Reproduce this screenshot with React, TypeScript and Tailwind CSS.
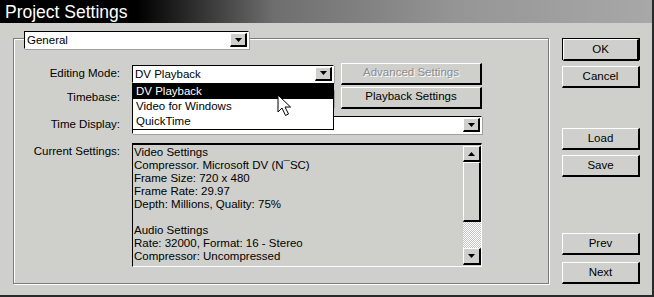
import React from "react";

const BG = "bg-[#cfd0cc]";

function DownTri() {
  return (
    <svg width="7" height="4" viewBox="0 0 7 4">
      <polygon points="0,0 7,0 3.5,4" fill="#000" />
    </svg>
  );
}
function UpTri() {
  return (
    <svg width="7" height="4" viewBox="0 0 7 4">
      <polygon points="0,4 7,4 3.5,0" fill="#000" />
    </svg>
  );
}

function ArrowBtn() {
  return (
    <div className="w-[17px] m-[1px] bg-[#cfd0cc] border-t border-l border-t-white border-l-white border-r-2 border-b-2 border-r-black border-b-black flex items-center justify-center">
      <DownTri />
    </div>
  );
}

function Select({ className, text }: { className: string; text: string }) {
  return (
    <div
      className={
        "h-[18px] bg-white border-t border-l border-t-black border-l-black border-r border-b border-r-white border-b-white flex items-stretch shadow-[1px_1px_0_#a0a0a0] " +
        className
      }
    >
      <div className="flex-1 pl-[2px] leading-[16px] text-black truncate">{text}</div>
      <ArrowBtn />
    </div>
  );
}

function Btn({
  children,
  className = "",
  disabled = false,
}: {
  children: React.ReactNode;
  className?: string;
  disabled?: boolean;
}) {
  return (
    <div
      className={
        "h-[22px] flex items-center justify-center border-t border-l border-t-white border-l-white border-r-2 border-b-2 border-r-black border-b-black " +
        (disabled ? "text-[#8c8c8c] [text-shadow:1px_1px_0_#ffffff] " : "text-black ") +
        className
      }
    >
      {children}
    </div>
  );
}

function Label({ children }: { children: React.ReactNode }) {
  return <div className="w-[106px] text-right text-black shrink-0">{children}</div>;
}

const lines = [
  "Video Settings",
  "Compressor. Microsoft DV (N\u00afSC)",
  "Frame Size: 720 x 480",
  "Frame Rate: 29.97",
  "Depth: Millions, Quality: 75%",
  "\u00a0",
  "Audio Settings",
  "Rate: 32000, Format: 16 - Stereo",
  "Compressor: Uncompressed",
];

export default function App() {
  return (
    <div
      className={
        "w-[654px] h-[297px] flex flex-col border-r-2 border-b-2 border-r-[#2a2a2a] border-b-[#2a2a2a] text-[11.5px] font-['Liberation_Sans',Arial,sans-serif] " +
        BG
      }
    >
      {/* Title bar */}
      <div className="h-[23px] shrink-0 bg-[linear-gradient(to_right,#000_0%,#000_21%,#6e6e6e_42%,#959595_70%,#a8a8a8_100%)] text-white text-[17.5px] leading-[23px] pl-[5px] pt-[1px]">
        Project Settings
      </div>

      {/* Body */}
      <div className="flex flex-1 pl-[13px] pt-[15px]">
        {/* Group box */}
        <div className="w-[536px] h-[246px] border border-[#7c7c7c] shadow-[1px_1px_0_#fff,inset_1px_1px_0_#fff] flex flex-col">
          <div className="ml-[10px] -mt-[8px]">
            <Select className="w-[225px]" text="General" />
          </div>

          {/* Editing Mode */}
          <div className="mt-[14px] h-[21px] flex items-center gap-[12px]">
            <Label>Editing Mode:</Label>
            <div className="relative">
              <Select className="w-[202px]" text="DV Playback" />
              {/* dropdown list */}
              <div className="absolute z-10 left-0 top-[18px] w-[202px] h-[47px] bg-white border border-black flex flex-col leading-[15px]">
                <div className="h-[15px] bg-black text-white pl-[3px]">DV Playback</div>
                <div className="h-[15px] text-black pl-[3px]">Video for Windows</div>
                <div className="h-[15px] text-black pl-[3px]">QuickTime</div>
              </div>
              <svg
                className="absolute z-20 left-[145px] top-[29px]"
                width="16"
                height="23"
                viewBox="0 0 16 23"
              >
                <polygon
                  points="1,1 1,18 5,14 8.5,21.5 11.5,20 8,13 13.5,13"
                  fill="#fff"
                  stroke="#000"
                  strokeWidth="1"
                  strokeLinejoin="miter"
                />
              </svg>
            </div>
            <Btn disabled className="ml-[-5px] w-[141px] h-[21px]">
              Advanced Settings
            </Btn>
          </div>

          {/* Timebase */}
          <div className="mt-[3px] h-[21px] flex items-center gap-[12px]">
            <Label>Timebase:</Label>
            <Select className="w-[202px]" text="" />
            <Btn className="ml-[-5px] w-[141px] h-[21px]">Playback Settings</Btn>
          </div>

          {/* Time Display */}
          <div className="mt-[8px] h-[18px] flex items-center gap-[12px]">
            <Label>Time Display:</Label>
            <Select className="w-[350px]" text="" />
          </div>

          {/* Current Settings */}
          <div className="mt-[9px] flex items-start gap-[12px]">
            <div className="w-[106px] text-right text-black shrink-0 leading-[13px] pt-[2px]">
              Current Settings:
            </div>
            <div className="w-[350px] h-[124px] flex border-t-2 border-l border-t-black border-l-black border-r border-b border-r-white border-b-white">
              <div className="flex-1 pl-[1px] pt-[1px] leading-[13px] text-black overflow-hidden whitespace-nowrap">
                {lines.map((l, i) => (
                  <div key={i}>{l}</div>
                ))}
              </div>
              <div className="w-[18px] flex flex-col pt-[1px] pb-[1px]">
                <div className="h-[16px] border-t border-l border-t-white border-l-white border-r-2 border-b-2 border-r-black border-b-black flex items-center justify-center">
                  <UpTri />
                </div>
                <div className="h-[60px] border-t border-l border-t-white border-l-white border-r-2 border-b-2 border-r-black border-b-black" />
                <div className="h-[26px] bg-[repeating-conic-gradient(#ffffff_0_25%,#c4c4c4_0_50%)] bg-[length:2px_2px]" />
                <div className="h-[17px] border-t border-l border-t-white border-l-white border-r-2 border-b-2 border-r-black border-b-black flex items-center justify-center">
                  <DownTri />
                </div>
              </div>
            </div>
          </div>
        </div>

        {/* Right buttons */}
        <div className="ml-[13px] w-[78px] flex flex-col">
          <div className="h-[22px] border border-black flex">
            <Btn className="flex-1 h-[20px]">OK</Btn>
          </div>
          <Btn className="mt-[6px]">Cancel</Btn>
          <Btn className="mt-[40px]">Load</Btn>
          <Btn className="mt-[5px]">Save</Btn>
          <Btn className="mt-[56px]">Prev</Btn>
          <Btn className="mt-[7px]">Next</Btn>
        </div>
      </div>
    </div>
  );
}
